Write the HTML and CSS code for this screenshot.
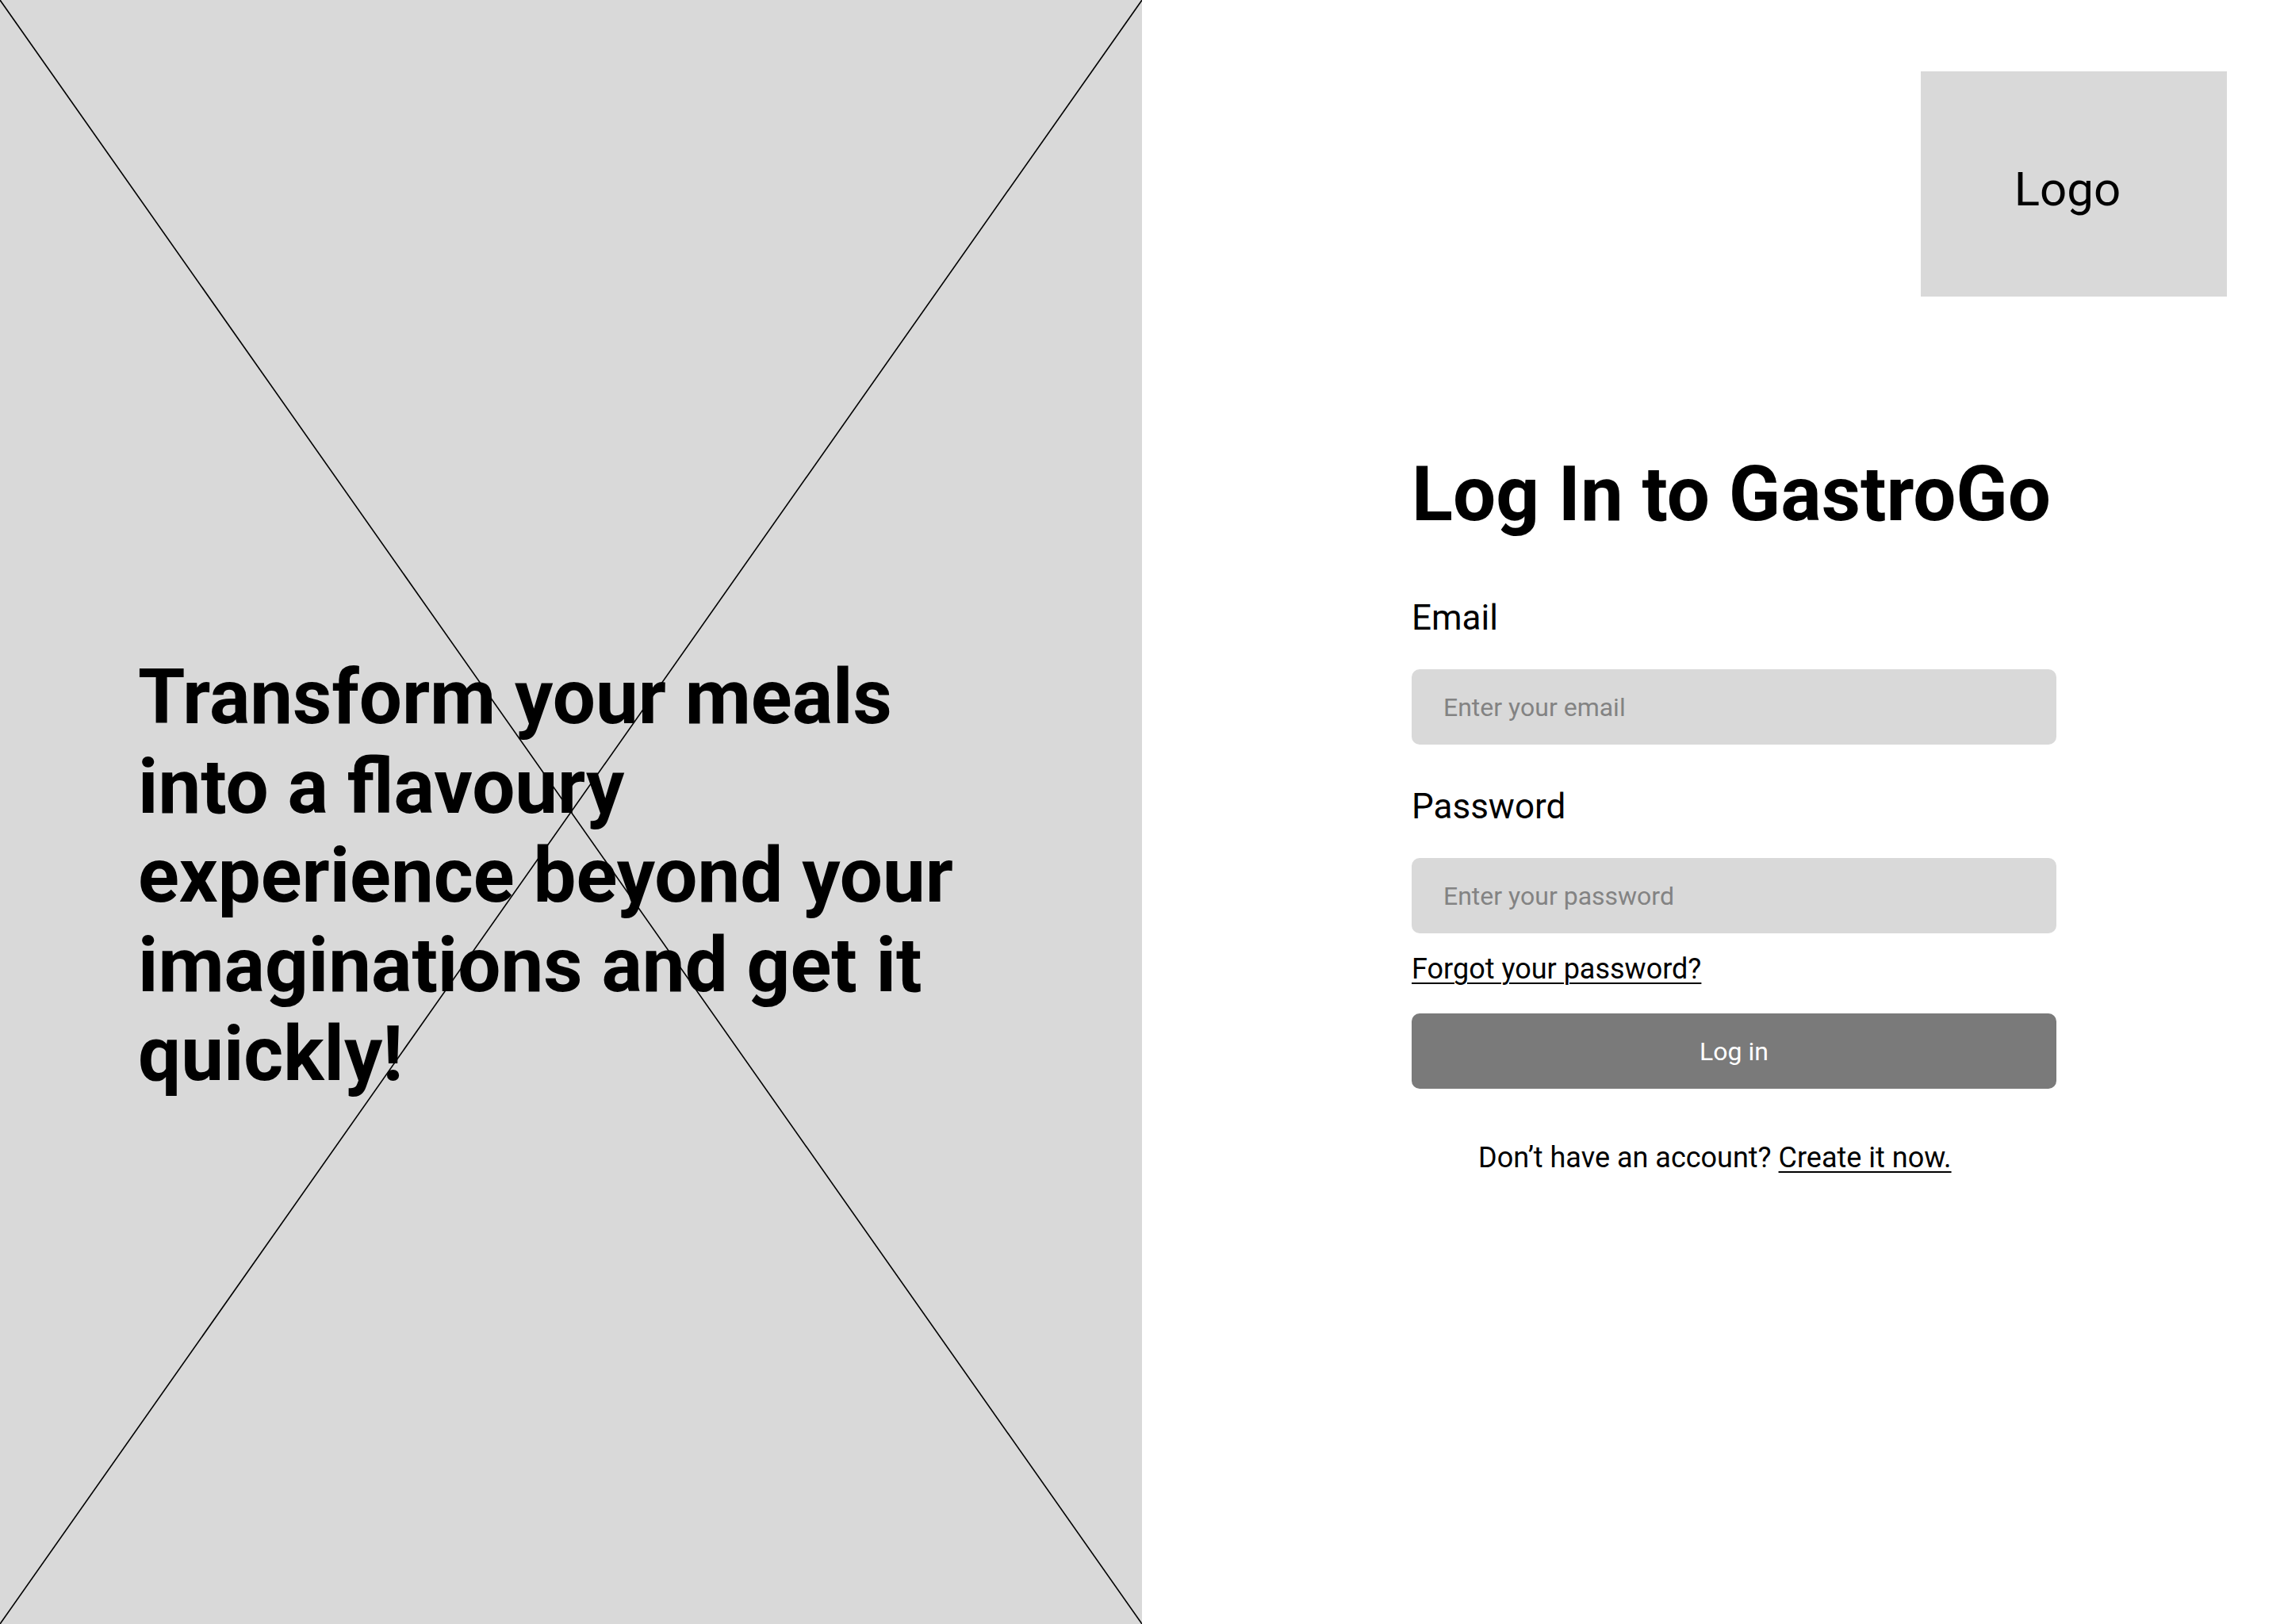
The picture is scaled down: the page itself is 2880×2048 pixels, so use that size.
FILE: index.html
```html
<!DOCTYPE html>
<html lang="en">
<head>
<meta charset="utf-8">
<title>Log In to GastroGo</title>
<link rel="stylesheet" href="styles.css">
</head>
<body>
<div class="page">
  <section class="hero">
    <svg class="hero-cross" viewBox="0 0 1440 2048" preserveAspectRatio="none" aria-hidden="true">
      <line x1="0" y1="0" x2="1440" y2="2048" />
      <line x1="1440" y1="0" x2="0" y2="2048" />
    </svg>
    <h2 class="hero-text">Transform your meals into a flavoury experience beyond your imaginations and get it quickly!</h2>
  </section>
  <section class="side">
    <div class="logo-row">
      <div class="logo"><span>Logo</span></div>
    </div>
    <form class="form">
      <h1 class="title">Log In to GastroGo</h1>
      <label class="label label-email" for="email">Email</label>
      <input class="field" id="email" type="email" placeholder="Enter your email">
      <label class="label label-password" for="password">Password</label>
      <input class="field" id="password" type="password" placeholder="Enter your password">
      <a class="forgot" href="#">Forgot your password?</a>
      <button class="btn" type="button">Log in</button>
      <p class="signup">Don’t have an account? <a href="#">Create it now.</a></p>
    </form>
  </section>
</div>
</body>
</html>
```

FILE: styles.css
```css
* { box-sizing: border-box; }

html, body {
  margin: 0;
  padding: 0;
  background: #ffffff;
}

body {
  font-family: Roboto, "Liberation Sans", sans-serif;
  color: #000000;
}

.page {
  display: flex;
  width: 2880px;
  height: 2048px;
}

.hero {
  position: relative;
  width: 1440px;
  height: 2048px;
  flex: 0 0 1440px;
  background: #d9d9d9;
  padding: 823px 0 0 174px;
  overflow: hidden;
}

.hero-cross {
  position: absolute;
  left: 0;
  top: 0;
  width: 100%;
  height: 100%;
}

.hero-cross line {
  stroke: #000000;
  stroke-width: 1.6;
  vector-effect: non-scaling-stroke;
}

.hero-text {
  position: relative;
  margin: 0;
  width: 1070px;
  font-size: 96px;
  font-weight: 700;
  line-height: 112.5px;
}

.side {
  flex: 1 1 auto;
  display: flex;
  flex-direction: column;
}

.logo-row {
  display: flex;
  justify-content: flex-end;
  padding: 90px 72px 0 0;
}

.logo {
  width: 386px;
  height: 284px;
  background: #d9d9d9;
  display: flex;
  align-items: center;
  justify-content: center;
  padding: 14px 16px 0 0;
  font-size: 60px;
  line-height: 1;
}

.form {
  display: flex;
  flex-direction: column;
  align-items: stretch;
  width: 813px;
  margin: 193px 0 0 340px;
}

.title {
  margin: 0;
  font-size: 96px;
  font-weight: 700;
  line-height: 112px;
}

.label {
  font-size: 44px;
  line-height: 52px;
  margin-bottom: 39px;
}

.label-email { margin-top: 74px; }
.label-password { margin-top: 52px; }

.field {
  display: block;
  width: 100%;
  height: 95px;
  border: none;
  border-radius: 10px;
  background: #d9d9d9;
  padding: 0 40px;
  font-family: Roboto, "Liberation Sans", sans-serif;
  font-size: 32px;
  color: #000000;
  outline: none;
}

.field::placeholder {
  color: #838383;
  opacity: 1;
}

.forgot {
  align-self: flex-start;
  margin-top: 24px;
  font-size: 36px;
  line-height: 42px;
  color: #000000;
  text-decoration: underline;
  text-underline-offset: 5px;
  text-decoration-thickness: 2px;
}

.btn {
  margin-top: 35px;
  height: 95px;
  border: none;
  border-radius: 10px;
  background: #7a7a7a;
  color: #ffffff;
  font-family: Roboto, "Liberation Sans", sans-serif;
  font-size: 32px;
  cursor: pointer;
}

.signup {
  margin: 66px 0 0 0;
  padding-left: 84px;
  font-size: 36px;
  line-height: 42px;
}

.signup a {
  color: #000000;
  text-decoration: underline;
  text-underline-offset: 5px;
  text-decoration-thickness: 2px;
}
```
